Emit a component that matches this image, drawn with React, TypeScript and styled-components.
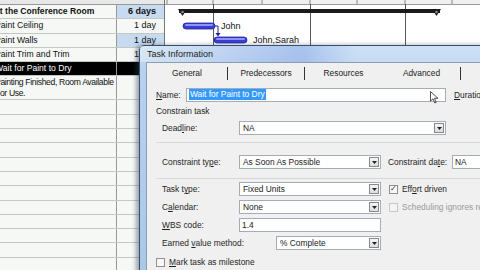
import { FC } from 'react';
import styled, { createGlobalStyle } from 'styled-components';

const GlobalStyle = createGlobalStyle`
  html, body {
    margin: 0;
    padding: 0;
    background: #ffffff;
  }
  body {
    font-family: 'Liberation Sans', Arial, sans-serif;
    font-size: 8px;
    color: #111;
  }
`;

type Row = { name: string; duration: string; bold?: boolean; selected?: boolean; tall?: boolean; durBlue?: boolean };

const rows: Row[] = [
  { name: 'at the Conference Room', duration: '6 days', bold: true, durBlue: true },
  { name: 'Paint Ceiling', duration: '1 day' },
  { name: 'Paint Walls', duration: '1 day', durBlue: true },
  { name: 'Paint Trim and Trim', duration: '1 day' },
  { name: 'Wait for Paint to Dry', duration: '3', selected: true },
  { name: 'Painting Finished, Room Available\nFor Use.', duration: '0', tall: true },
];

const emptyRows = Array.from({ length: 12 });

const GanttChart: FC = () => (
  <svg width="315" height="270" viewBox="0 0 315 270">
    <rect x="0" y="0" width="315" height="270" fill="#ffffff" />
    <rect x="0" y="0" width="315" height="4" fill="#f0f0f0" />
    {[2, 48, 97, 145, 192, 240, 287].map((x) => (
      <line key={x} x1={x} y1="0" x2={x} y2="4" stroke="#888" strokeWidth="1" />
    ))}
    <line x1="0" y1="4.5" x2="315" y2="4.5" stroke="#999" />
    {[48, 145, 240].map((x) => (
      <line key={x} x1={x + 0.5} y1="4" x2={x + 0.5} y2="270" stroke="#555" strokeWidth="1" />
    ))}
    {/* summary bar */}
    <rect x="14" y="9" width="261" height="4" fill="#1a1a1a" />
    <path d="M13 9 L22 9 L17.5 16 Z" fill="#1a1a1a" />
    <path d="M267 9 L276 9 L271.5 16 Z" fill="#1a1a1a" />
    <circle cx="17.5" cy="12" r="1.3" fill="#888" />
    <circle cx="271.5" cy="12" r="1.3" fill="#888" />
    {/* John bar */}
    <rect x="18" y="23" width="32" height="6" rx="3" fill="#3a3ed8" stroke="#1e22a0" strokeWidth="0.8" />
    <rect x="20" y="24" width="28" height="2" rx="1" fill="#8f93f2" />
    <text x="56" y="29" fontFamily="Liberation Sans, Arial, sans-serif" fontSize="9" fill="#111">John</text>
    {/* link arrow */}
    <path d="M50 26 L53 26 L53 34" fill="none" stroke="#1e22a0" strokeWidth="1" />
    <path d="M50.5 33 L55.5 33 L53 36.5 Z" fill="#1e22a0" />
    {/* John,Sarah bar */}
    <rect x="49" y="37" width="33" height="6" rx="3" fill="#3a3ed8" stroke="#1e22a0" strokeWidth="0.8" />
    <rect x="51" y="38" width="29" height="2" rx="1" fill="#8f93f2" />
    <text x="88" y="43" fontFamily="Liberation Sans, Arial, sans-serif" fontSize="9" fill="#111">John,Sarah</text>
  </svg>
);

const CursorIcon: FC = () => (
  <svg width="9" height="13" viewBox="0 0 9 13">
    <path d="M0.5 0.5 L0.5 10 L3 7.8 L4.8 12 L6.2 11.4 L4.5 7.3 L8 7.3 Z" fill="#fff" stroke="#222" strokeWidth="0.8" />
  </svg>
);

const DropButton: FC = () => (
  <DropBtn>
    <svg width="5" height="3" viewBox="0 0 5 3">
      <path d="M0 0 L5 0 L2.5 3 Z" fill="#222" />
    </svg>
  </DropBtn>
);

const Select: FC<{ value: string; width: number }> = ({ value, width }) => (
  <SelectBox $width={width}>
    <span>{value}</span>
    <DropButton />
  </SelectBox>
);

const App: FC = () => (
  <>
    <GlobalStyle />
    <Screen>
      <ProjectView>
        <TaskTable>
          <HeaderStrip />
          {rows.map((r) => (
            <TaskRow key={r.name} $selected={r.selected} $tall={r.tall}>
              <NameCell $bold={r.bold}>
                <NameText $tight={r.tall}>{r.name}</NameText>
              </NameCell>
              <DurCell $blue={r.durBlue} $bold={r.bold}>
                {r.duration}
              </DurCell>
            </TaskRow>
          ))}
          {emptyRows.map((_, i) => (
            <TaskRow key={i}>
              <NameCell />
              <DurCell />
            </TaskRow>
          ))}
        </TaskTable>
        <GanttArea>
          <GanttChart />
        </GanttArea>
      </ProjectView>

      <Dialog>
        <TitleBar>Task Information</TitleBar>
        <Body>
          <Tabs>
            <Tab $w={80}>General</Tab>
            <Tab $w={76}>Predecessors</Tab>
            <Tab $w={77} $noSep>
              Resources
            </Tab>
            <Tab $w={77}>Advanced</Tab>
          </Tabs>
          <Form>
            <NameRow>
              <Label $w={30}>
                <u>N</u>ame:
              </Label>
              <TextBox $width={260}>
                <Selected>Wait for Paint to Dry</Selected>
                <Cursor>
                  <CursorIcon />
                </Cursor>
              </TextBox>
              <Label $w={40} $ml={8}>
                <u>D</u>uration
              </Label>
            </NameRow>
            <SectionTitle>Constrain task</SectionTitle>
            <Group $top={2} $bottom={7}>
              <FieldRow>
                <Label $w={77}>
                  Dead<u>l</u>ine:
                </Label>
                <Select value="NA" width={207} />
              </FieldRow>
            </Group>
            <Divider />
            <Group $top={12} $bottom={9}>
              <FieldRow>
                <Label $w={77}>
                  Constraint ty<u>p</u>e:
                </Label>
                <Select value="As Soon As Possible" width={142} />
                <Label $w={64} $ml={7}>
                  Constraint da<u>t</u>e:
                </Label>
                <TextBox $width={40}>NA</TextBox>
              </FieldRow>
            </Group>
            <Divider />
            <Group $top={3} $bottom={0} $gap={4}>
              <FieldRow>
                <Label $w={77}>
                  Task t<u>y</u>pe:
                </Label>
                <Select value="Fixed Units" width={142} />
                <Check $checked $ml={8} />
                <CheckLabel>
                  Eff<u>o</u>rt driven
                </CheckLabel>
              </FieldRow>
              <FieldRow>
                <Label $w={77}>
                  C<u>a</u>lendar:
                </Label>
                <Select value="None" width={142} />
                <Check $disabled $ml={8} />
                <CheckLabel $disabled>Scheduling ignores resource calendars</CheckLabel>
              </FieldRow>
              <FieldRow>
                <Label $w={77}>
                  <u>W</u>BS code:
                </Label>
                <TextBox $width={142}>1.4</TextBox>
              </FieldRow>
              <FieldRow>
                <Label $w={114}>
                  Earned <u>v</u>alue method:
                </Label>
                <Select value="% Complete" width={105} />
              </FieldRow>
            </Group>
            <MilestoneRow>
              <Check />
              <CheckLabel>
                <u>M</u>ark task as milestone
              </CheckLabel>
            </MilestoneRow>
          </Form>
        </Body>
      </Dialog>
    </Screen>
  </>
);

const Screen = styled.div`
  position: relative;
  width: 480px;
  height: 270px;
  overflow: hidden;
  background: #fff;
`;

const ProjectView = styled.div`
  display: grid;
  grid-template-columns: 165px 315px;
  height: 270px;
`;

const TaskTable = styled.div`
  display: flex;
  flex-direction: column;
  background: #f6f8f5;
  border-right: 1px solid #777;
  overflow: hidden;
`;

const HeaderStrip = styled.div`
  height: 4px;
  flex: none;
  background: #e8e8e8;
  border-bottom: 1px solid #999;
`;

const TaskRow = styled.div<{ $selected?: boolean; $tall?: boolean }>`
  display: grid;
  grid-template-columns: 117px 1fr;
  height: ${(p) => (p.$tall ? 23 : 13.3)}px;
  flex: none;
  border-bottom: 1px solid #c4c8c4;
  background: ${(p) => (p.$selected ? '#000' : 'transparent')};
  color: ${(p) => (p.$selected ? '#fff' : '#111')};
`;

const NameCell = styled.div<{ $bold?: boolean }>`
  border-right: 1px solid #999;
  font-size: 8.6px;
  line-height: 11px;
  font-weight: ${(p) => (p.$bold ? 700 : 400)};
  overflow: hidden;
  padding-top: 1px;
`;

const NameText = styled.div<{ $tight?: boolean }>`
  margin-left: -5px;
  white-space: pre;
  letter-spacing: ${(p) => (p.$tight ? '-0.35px' : '0')};
`;

const DurCell = styled.div<{ $blue?: boolean; $bold?: boolean }>`
  background: ${(p) => (p.$blue ? '#c6daf0' : 'transparent')};
  font-size: 9px;
  font-weight: ${(p) => (p.$bold ? 700 : 400)};
  line-height: 13px;
  text-align: right;
  padding-right: 8px;
  white-space: nowrap;
  overflow: hidden;
`;

const GanttArea = styled.div`
  overflow: hidden;
  svg {
    display: block;
  }
`;

const Dialog = styled.div`
  position: absolute;
  left: 139px;
  top: 45px;
  width: 360px;
  height: 240px;
  background: linear-gradient(180deg, #c6dcf2 0%, #b7d2ee 10%, #a9c6e6 100%);
  border: 1px solid #3b5068;
  border-radius: 5px 0 0 0;
  box-shadow: -3px 0 4px rgba(40, 60, 90, 0.45);
  display: flex;
  flex-direction: column;
`;

const TitleBar = styled.div`
  height: 16px;
  flex: none;
  padding-left: 7px;
  font-family: 'Liberation Sans', Arial, sans-serif;
  font-size: 9px;
  line-height: 17px;
  color: #1b1b1b;
  background: linear-gradient(90deg, rgba(255, 255, 255, 0.35), rgba(120, 150, 230, 0.35) 45%, rgba(220, 235, 250, 0.3) 60%);
`;

const Body = styled.div`
  flex: 1;
  margin-left: 6px;
  background: #f0f0f0;
  border: 1px solid #8a9db3;
  border-right: none;
  display: flex;
  flex-direction: column;
`;

const Tabs = styled.div`
  display: flex;
  height: 21px;
  flex: none;
  align-items: center;
`;

const Tab = styled.div<{ $w: number; $noSep?: boolean }>`
  width: ${(p) => p.$w}px;
  height: 13px;
  line-height: 13px;
  text-align: center;
  font-size: 8.4px;
  color: #222;
  border-right: 1px solid ${(p) => (p.$noSep ? 'transparent' : '#333')};
`;

const Form = styled.div`
  display: flex;
  flex-direction: column;
  padding-left: 9px;
`;

const NameRow = styled.div`
  display: flex;
  align-items: center;
  height: 19px;
  margin-top: 1px;
`;

const Label = styled.div<{ $w: number; $ml?: number }>`
  width: ${(p) => p.$w}px;
  margin-left: ${(p) => p.$ml ?? 0}px;
  flex: none;
  font-size: 8.4px;
  color: #1f1f1f;
  white-space: nowrap;
  u {
    text-decoration: underline;
  }
`;

const TextBox = styled.div<{ $width: number }>`
  position: relative;
  width: ${(p) => p.$width}px;
  height: 14px;
  flex: none;
  box-sizing: border-box;
  background: #fff;
  border: 1px solid #a5acb5;
  font-size: 8.4px;
  line-height: 10px;
  padding-left: 2px;
  display: flex;
  align-items: center;
  color: #222;
`;

const Selected = styled.span`
  background: #3399ff;
  color: #fff;
  padding: 0 1px;
  line-height: 11px;
`;

const Cursor = styled.span`
  position: absolute;
  right: 6px;
  top: 2px;
  line-height: 0;
`;

const SectionTitle = styled.div`
  height: 15px;
  line-height: 15px;
  font-size: 8.4px;
  color: #1f1f1f;
`;

const Group = styled.div<{ $top: number; $bottom: number; $gap?: number }>`
  display: flex;
  flex-direction: column;
  gap: ${(p) => p.$gap ?? 0}px;
  padding: ${(p) => p.$top}px 0 ${(p) => p.$bottom}px 6px;
`;

const Divider = styled.div`
  height: 1px;
  background: #d8d8d8;
  margin-right: 10px;
`;

const FieldRow = styled.div`
  display: flex;
  align-items: center;
  height: 14px;
`;

const SelectBox = styled.div<{ $width: number }>`
  width: ${(p) => p.$width}px;
  height: 14px;
  flex: none;
  box-sizing: border-box;
  background: #fff;
  border: 1px solid #a5acb5;
  display: flex;
  align-items: center;
  justify-content: space-between;
  font-size: 8.4px;
  color: #222;
  padding-left: 3px;
`;

const DropBtn = styled.div`
  width: 10px;
  height: 10px;
  margin-right: 1px;
  box-sizing: border-box;
  border: 1px solid #888;
  background: linear-gradient(#f6f6f6, #dcdcdc);
  display: flex;
  align-items: center;
  justify-content: center;
`;

const Check = styled.div<{ $checked?: boolean; $disabled?: boolean; $ml?: number }>`
  width: 9px;
  height: 9px;
  flex: none;
  box-sizing: border-box;
  margin-left: ${(p) => p.$ml ?? 0}px;
  border: 1px solid ${(p) => (p.$disabled ? '#c8c8c8' : '#8e8f8f')};
  background: ${(p) => (p.$disabled ? '#f4f4f4' : '#f8f8f8')};
  position: relative;
  &::after {
    content: ${(p) => (p.$checked ? "'✓'" : "''")};
    position: absolute;
    left: 0;
    top: -2px;
    font-size: 8px;
    color: #333;
  }
`;

const CheckLabel = styled.div<{ $disabled?: boolean }>`
  margin-left: 4px;
  font-size: 8.4px;
  white-space: nowrap;
  color: ${(p) => (p.$disabled ? '#9a9a9a' : '#1f1f1f')};
`;

const MilestoneRow = styled.div`
  display: flex;
  align-items: center;
  height: 14px;
  margin-top: 5px;
`;

export default App;
